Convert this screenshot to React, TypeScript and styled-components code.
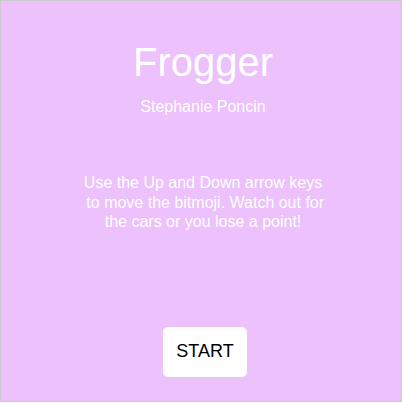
import { styled, createGlobalStyle } from "styled-components";

const GlobalStyle = createGlobalStyle`
  body {
    margin: 0;
    font-family: "Liberation Sans", Arial, Helvetica, sans-serif;
  }
`;

const App = () => {
  return (
    <>
      <GlobalStyle />
      <Board>
        <Title>Frogger</Title>
        <Author>Stephanie Poncin</Author>
        <Instructions>
          Use the Up and Down arrow keys &nbsp;to move the bitmoji. Watch out for the cars or you
          lose a point!
        </Instructions>
        <StartButton>START</StartButton>
      </Board>
    </>
  );
};

export default App;

const Board = styled.div`
  box-sizing: border-box;
  width: 402px;
  height: 402px;
  border: 1px solid #c9c9c9;
  background: #ecc1fc;
  color: #fff;
  display: flex;
  flex-direction: column;
  align-items: center;
  padding: 38px 0 0 4px;
`;

const Title = styled.h1`
  margin: 0;
  font-size: 40px;
  font-weight: normal;
  line-height: 46px;
`;

const Author = styled.div`
  margin-top: 13px;
  font-size: 16px;
  line-height: 18px;
`;

const Instructions = styled.p`
  margin: 57px 0 0;
  width: 250px;
  font-size: 16px;
  line-height: 19.5px;
  text-align: center;
`;

const StartButton = styled.button`
  margin: 95px 0 0 4px;
  width: 84px;
  height: 50px;
  border: none;
  border-radius: 5px;
  background: #fff;
  color: #000;
  font-family: "Liberation Sans", Arial, sans-serif;
  font-size: 18px;
  padding: 0;
  cursor: pointer;
`;
